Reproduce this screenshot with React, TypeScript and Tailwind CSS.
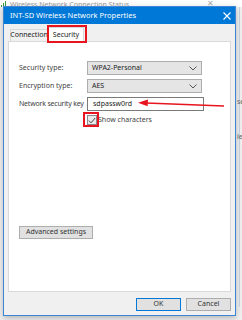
import React from 'react';

const Chevron = () => (
  <svg width="8" height="5" viewBox="0 0 8 5" className="text-[#555]">
    <path d="M0.5 0.5 L4 4 L7.5 0.5" fill="none" stroke="currentColor" strokeWidth="1" />
  </svg>
);

const SelectBox = ({ value }: { value: string }) => (
  <div className="flex h-[14px] w-[115px] items-center justify-between border border-[#adadad] bg-[#e5e5e5] pl-[4px] pr-[4px] text-[7px] text-[#222]">
    <span>{value}</span>
    <Chevron />
  </div>
);

export default function App() {
  return (
    <div
      className="relative h-[320px] w-[242px] overflow-hidden bg-[#f0f0f0]"
      style={{ fontFamily: '"Noto Sans", "Open Sans", sans-serif' }}
    >
      {/* window behind */}
      <div className="flex h-[7px] items-end gap-[3px] bg-white pl-[1px] text-[7px] leading-[8px] text-[#9a9a9a]">
        <svg width="6" height="6" viewBox="0 0 6 6">
          <rect x="0" y="4" width="1" height="2" fill="#3a9a3a" />
          <rect x="2" y="2" width="1" height="4" fill="#3a9a3a" />
          <rect x="4" y="0" width="1" height="6" fill="#3a9a3a" />
        </svg>
        <span className="-mb-[2px]">Wireless Network Connection Status</span>
      </div>
      <div className="absolute left-[207px] top-[0px] text-[8px] leading-[6px] text-[#aaa]">✕</div>
      <div className="absolute left-[239px] top-[7px] h-[300px] w-px bg-[#c8d4e4]" />
      <div className="absolute left-[237px] top-[97px] text-[7px] text-[#666]">se</div>
      <div className="absolute left-[237px] top-[132px] text-[7px] text-[#666]">le</div>

      {/* dialog */}
      <div className="absolute left-[3px] top-[6px] flex h-[310px] w-[233px] flex-col border border-[#3c86d3] bg-[#f0f0f0] shadow-[0_2px_6px_rgba(0,0,0,0.25)]">
        <div className="flex h-[17px] items-center justify-between bg-[#0078d7] pl-[6px] pr-[4px] text-[7.5px] text-white">
          <span>INT-SD Wireless Network Properties</span>
          <svg width="8" height="8" viewBox="0 0 8 8">
            <path d="M0.5 0.5 L7.5 7.5 M7.5 0.5 L0.5 7.5" stroke="white" strokeWidth="1.1" />
          </svg>
        </div>

        <div className="flex flex-col px-[4px] pt-[3px]">
          {/* tabs */}
          <div className="flex h-[14px] items-end text-[7px] text-[#222]">
            <div className="ml-[2px] flex h-[12px] w-[38px] items-center justify-center border border-b-0 border-[#d9d9d9] bg-[#f0f0f0]">
              Connection
            </div>
            <div className="-mb-px flex h-[15px] w-[36px] items-center justify-center border border-b-0 border-[#d9d9d9] bg-white">
              Security
            </div>
          </div>

          {/* panel */}
          <div className="flex h-[251px] w-[223px] flex-col border border-[#d9d9d9] bg-white px-[10px] pt-[19px] text-[7px] text-[#444]">
            <div className="flex flex-col gap-[4px]">
              <div className="flex h-[14px] items-center">
                <span className="w-[68px]">Security type:</span>
                <SelectBox value="WPA2-Personal" />
              </div>
              <div className="flex h-[14px] items-center">
                <span className="w-[68px]">Encryption type:</span>
                <SelectBox value="AES" />
              </div>
              <div className="flex h-[14px] items-center">
                <span className="w-[68px] whitespace-nowrap tracking-[-0.2px]">Network security key</span>
                <div className="flex h-[14px] w-[117px] items-center border border-[#7a7a7a] bg-white pl-[5px] text-[7px] text-[#222]">
                  sdpassw0rd
                </div>
              </div>
              <div className="flex h-[10px] items-center pl-[68px]">
                <div className="flex h-[10px] w-[10px] items-center justify-center border border-[#8a8a8a] bg-[#eaeaea]">
                  <svg width="8" height="7" viewBox="0 0 8 7">
                    <path d="M0.8 3.6 L3 5.8 L7.2 1" fill="none" stroke="#444" strokeWidth="1" />
                  </svg>
                </div>
                <span className="ml-[1px]">Show characters</span>
              </div>
            </div>

            <div className="mt-[101px] flex h-[13px] w-[74px] items-center justify-center border border-[#adadad] bg-[#e1e1e1] text-[7px] text-[#333]">
              Advanced settings
            </div>
          </div>

          {/* buttons */}
          <div className="mt-[6px] flex justify-end gap-[5px] text-[7px] text-[#333]">
            <div className="flex h-[13px] w-[45px] items-center justify-center border border-[#0078d7] bg-[#e1e1e1]">
              OK
            </div>
            <div className="flex h-[13px] w-[45px] items-center justify-center border border-[#adadad] bg-[#e1e1e1]">
              Cancel
            </div>
          </div>
        </div>
      </div>

      {/* annotations */}
      <div className="absolute left-[47px] top-[25px] h-[18px] w-[40px] border-2 border-[#e8141e]" />
      <div className="absolute left-[83px] top-[112px] h-[15px] w-[16px] border-2 border-[#e8141e]" />
      <svg className="absolute left-0 top-0" width="242" height="320" viewBox="0 0 242 320">
        <path d="M146 103 L224 106" stroke="#e8141e" strokeWidth="1.6" />
        <path d="M138 102.7 L148 99.5 L147.6 106.3 Z" fill="#e8141e" />
      </svg>
    </div>
  );
}
